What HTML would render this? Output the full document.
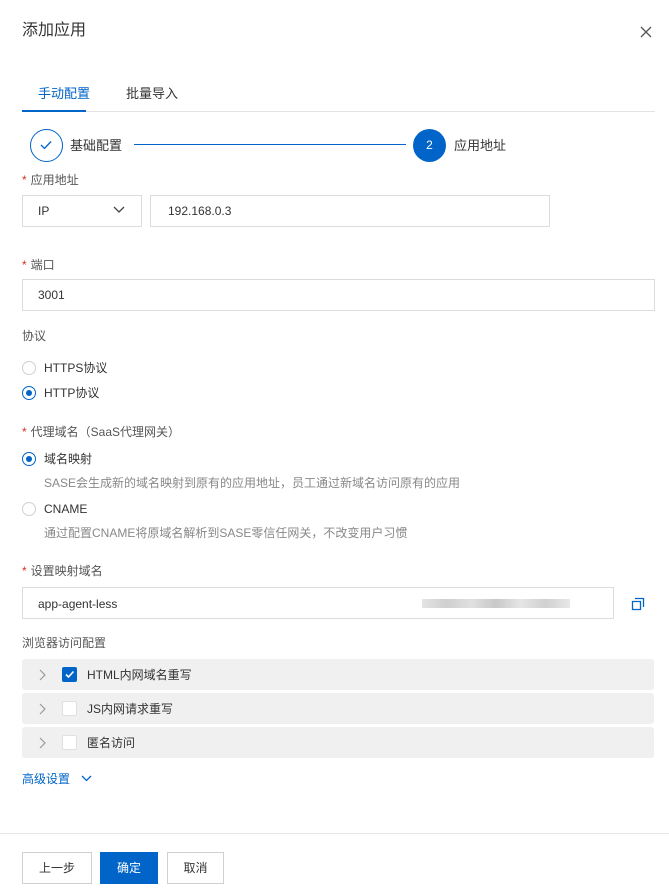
<!DOCTYPE html>
<html><head><meta charset="utf-8"><style>
*{box-sizing:border-box;margin:0;padding:0}
body{width:669px;height:891px;background:#fff;position:relative;overflow:hidden;font-family:"Liberation Sans","Noto Sans CJK SC",sans-serif;color:#333;font-size:12px}
.a{position:absolute;white-space:nowrap;line-height:1}
.lbl{font-size:12px;color:#555}
.req{color:#d93026;margin-right:4px}
.box{position:absolute;border:1px solid #dcdcdc;background:#fff}
.radio{position:absolute;width:14px;height:14px;border-radius:50%;border:1px solid #d0d0d0;background:#fff}
.radio.on{border-color:#0064c8}
.radio.on::after{content:"";position:absolute;left:3px;top:3px;width:6px;height:6px;border-radius:50%;background:#0064c8}
.row{position:absolute;left:22px;width:632px;height:31px;background:#f0f0f0;border-radius:3px}
.cb{position:absolute;left:40px;top:8px;width:15px;height:15px;background:#fff;border:1px solid #e0e0e0;border-radius:2px}
.btn{position:absolute;top:852px;height:32px;border:1px solid #d0d0d0;background:#fff;font-size:12px;line-height:30px;text-align:center;color:#333}
</style></head><body>
<div class="a" style="left:22px;top:23px;font-size:16px;color:#333">添加应用</div>
<svg class="a" style="left:640px;top:26px" width="12" height="12"><path d="M1 1L11 11M11 1L1 11" stroke="#555" stroke-width="1.3"/></svg>

<div class="a" style="left:38px;top:87px;font-size:13px;color:#0064c8">手动配置</div>
<div class="a" style="left:126px;top:87px;font-size:13px;color:#333">批量导入</div>
<div class="a" style="left:22px;top:111px;width:633px;height:1px;background:#e3e3e3"></div>
<div class="a" style="left:22px;top:110px;width:64px;height:2px;background:#0064c8"></div>

<div class="a" style="left:30px;top:129px;width:33px;height:33px;border-radius:50%;border:1px solid #0064c8"></div>
<svg class="a" style="left:39px;top:139px" width="14" height="12"><path d="M2 6L5.5 9.5L12 2.5" stroke="#0064c8" stroke-width="1.3" fill="none"/></svg>
<div class="a" style="left:70px;top:139px;font-size:13px">基础配置</div>
<div class="a" style="left:134px;top:144px;width:272px;height:1px;background:#0064c8"></div>
<div class="a" style="left:413px;top:129px;width:33px;height:33px;border-radius:50%;background:#0064c8;color:#fff;font-size:12px;line-height:33px;text-align:center">2</div>
<div class="a" style="left:454px;top:139px;font-size:13px">应用地址</div>

<div class="a lbl" style="left:22px;top:174px"><span class="req">*</span>应用地址</div>
<div class="box" style="left:22px;top:195px;width:120px;height:32px"></div>
<div class="a" style="left:38px;top:205px">IP</div>
<svg class="a" style="left:113px;top:206px" width="12" height="8"><path d="M1 1L6 6L11 1" stroke="#444" stroke-width="1.3" fill="none"/></svg>
<div class="box" style="left:150px;top:195px;width:400px;height:32px"></div>
<div class="a" style="left:168px;top:205px">192.168.0.3</div>

<div class="a lbl" style="left:22px;top:259px"><span class="req">*</span>端口</div>
<div class="box" style="left:22px;top:279px;width:633px;height:32px"></div>
<div class="a" style="left:38px;top:289px">3001</div>

<div class="a lbl" style="left:22px;top:330px">协议</div>
<div class="radio" style="left:22px;top:361px"></div>
<div class="a" style="left:44px;top:362px">HTTPS协议</div>
<div class="radio on" style="left:22px;top:386px"></div>
<div class="a" style="left:44px;top:387px">HTTP协议</div>

<div class="a lbl" style="left:22px;top:426px"><span class="req">*</span>代理域名（SaaS代理网关）</div>
<div class="radio on" style="left:22px;top:452px"></div>
<div class="a" style="left:44px;top:453px">域名映射</div>
<div class="a" style="left:44px;top:477px;color:#888">SASE会生成新的域名映射到原有的应用地址，员工通过新域名访问原有的应用</div>
<div class="radio" style="left:22px;top:502px"></div>
<div class="a" style="left:44px;top:503px">CNAME</div>
<div class="a" style="left:44px;top:527px;color:#888">通过配置CNAME将原域名解析到SASE零信任网关，不改变用户习惯</div>

<div class="a lbl" style="left:22px;top:565px"><span class="req">*</span>设置映射域名</div>
<div class="box" style="left:22px;top:587px;width:592px;height:32px"></div>
<div class="a" style="left:38px;top:598px">app-agent-less</div>
<div class="a" style="left:422px;top:599px;width:148px;height:9px;background:linear-gradient(90deg,#e4e4e4,#cfcfcf,#e0e0e0,#c8c8c8,#e6e6e6,#d0d0d0,#e8e8e8)"></div>
<svg class="a" style="left:631px;top:597px" width="14" height="14"><path d="M4 1.5H12.5V10M1.5 4.5H9.5V12.5H1.5Z" stroke="#0064c8" stroke-width="1.3" fill="none"/></svg>

<div class="a lbl" style="left:22px;top:637px">浏览器访问配置</div>
<div class="row" style="top:659px"><svg class="a" style="left:17px;top:10px" width="8" height="12"><path d="M1 1L6 6L1 11" stroke="#999" stroke-width="1.2" fill="none"/></svg><div class="cb" style="background:#0064c8;border-color:#0064c8"><svg width="13" height="13" style="position:absolute;left:0;top:0"><path d="M3 6.5L5.5 9L10.5 3.5" stroke="#fff" stroke-width="1.6" fill="none"/></svg></div><div class="a" style="left:65px;top:10px">HTML内网域名重写</div></div>
<div class="row" style="top:693px"><svg class="a" style="left:17px;top:10px" width="8" height="12"><path d="M1 1L6 6L1 11" stroke="#999" stroke-width="1.2" fill="none"/></svg><div class="cb"></div><div class="a" style="left:65px;top:10px">JS内网请求重写</div></div>
<div class="row" style="top:727px"><svg class="a" style="left:17px;top:10px" width="8" height="12"><path d="M1 1L6 6L1 11" stroke="#999" stroke-width="1.2" fill="none"/></svg><div class="cb"></div><div class="a" style="left:65px;top:10px">匿名访问</div></div>

<div class="a" style="left:22px;top:773px;color:#0064c8">高级设置</div>
<svg class="a" style="left:81px;top:775px" width="11" height="7"><path d="M1 1L5.5 5.5L10 1" stroke="#0064c8" stroke-width="1.3" fill="none"/></svg>

<div class="a" style="left:0;top:833px;width:669px;height:1px;background:#e6e6e6"></div>
<div class="btn" style="left:22px;width:70px">上一步</div>
<div class="btn" style="left:100px;width:58px;background:#0064c8;border-color:#0064c8;color:#fff">确定</div>
<div class="btn" style="left:167px;width:57px">取消</div>
</body></html>
